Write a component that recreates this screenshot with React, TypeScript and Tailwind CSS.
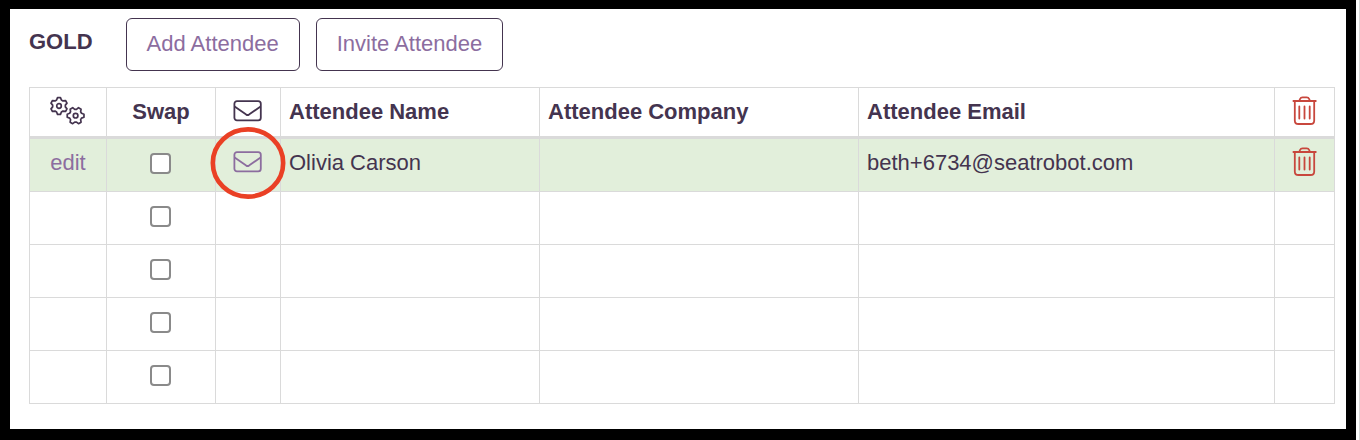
import React, { useState } from "react";

type Attendee = {
  name: string;
  company: string;
  email: string;
};

const seats: (Attendee | null)[] = [
  { name: "Olivia Carson", company: "", email: "beth+6734@seatrobot.com" },
  null,
  null,
  null,
  null,
];

function gearPath(cx: number, cy: number, turn: number) {
  const points: string[] = [];
  for (let i = 0; i < 6; i++) {
    const mid = turn + i * 60;
    const corners = [
      [-22, 6.4],
      [-10, 8.5],
      [10, 8.5],
      [22, 6.4],
    ];
    corners.forEach(([offset, r]) => {
      const a = ((mid + offset) * Math.PI) / 180;
      points.push(`${(cx + r * Math.cos(a)).toFixed(2)} ${(cy + r * Math.sin(a)).toFixed(2)}`);
    });
  }
  return `M${points.join("L")}Z`;
}

function GearsIcon() {
  return (
    <svg viewBox="0 0 38 30" className="w-[38px] h-[30px]" fill="none" stroke="currentColor" strokeWidth="1.7" strokeLinejoin="round" aria-hidden="true">
      <path d={gearPath(10, 10, 30)} />
      <circle cx="10" cy="10" r="2.3" />
      <path d={gearPath(26.6, 19.7, 0)} />
      <circle cx="26.6" cy="19.7" r="2.3" />
    </svg>
  );
}

function EnvelopeIcon() {
  return (
    <svg viewBox="0 0 30 22" className="w-[30px] h-[22px]" fill="none" stroke="currentColor" strokeWidth="1.8" strokeLinejoin="round" aria-hidden="true">
      <rect x="1.4" y="1.2" width="26.4" height="19.2" rx="2.6" />
      <path d="M1.6 6.5L13.2 14.6Q14.6 15.4 16 14.6L27.6 6.5" />
    </svg>
  );
}

function TrashIcon() {
  return (
    <svg viewBox="0 0 26 30" className="w-[26px] h-[30px]" fill="none" stroke="currentColor" strokeWidth="1.8" strokeLinecap="round" strokeLinejoin="round" aria-hidden="true">
      <path d="M1.4 5H23.8M7.3 4.8L8 3Q8.7 1.4 10.5 1.4H14.7Q16.5 1.4 17.2 3L17.9 4.8" />
      <path d="M2.8 5V24.4Q2.8 28 6.5 28H18.5Q22.2 28 22.2 24.4V5" />
      <path d="M7.3 10.4V22.6M12.5 10.4V22.6M17.7 10.4V22.6" />
    </svg>
  );
}

export default function App() {
  const [swaps, setSwaps] = useState<boolean[]>(seats.map(() => false));

  const toggleSwap = (index: number) => {
    setSwaps(swaps.map((s, i) => (i === index ? !s : s)));
  };

  const cell = "border border-[#dadada] align-top";

  return (
    <div className="min-h-screen flex bg-white border-r border-[#dadada] pr-[3px] font-['Liberation_Sans',Arial,sans-serif] text-[22px] leading-8 text-[#44344f]">
      <div className="flex-1 flex bg-black pt-[9px] pr-[10px] pb-[11px] pl-[10px]">
        <main className="flex-1 bg-white pt-[9px] pr-[11px] pl-[19px]">
          {/* Toolbar */}
          <div className="flex items-start mb-4">
            <h1 className="font-bold mt-2 mr-[33px]">GOLD</h1>
            <div className="flex gap-4">
              <button className="h-[53px] px-5 pb-[2px] border border-[#44344f] rounded-md text-[#8c6d9f]">Add Attendee</button>
              <button className="h-[53px] px-5 pb-[2px] border border-[#44344f] rounded-md text-[#8c6d9f]">Invite Attendee</button>
            </div>
          </div>

          {/* Attendees */}
          <table className="w-full table-fixed border-collapse text-left">
            <colgroup>
              <col className="w-[77px]" />
              <col className="w-[109px]" />
              <col className="w-[65px]" />
              <col className="w-[259px]" />
              <col className="w-[319px]" />
              <col />
              <col className="w-[60px]" />
            </colgroup>
            <thead>
              <tr className="h-[50px]">
                <th aria-label="Settings" className={`${cell} border-b-3 pt-2`}>
                  <div className="flex justify-center"><GearsIcon /></div>
                </th>
                <th className={`${cell} border-b-3 pt-2 text-center`}>Swap</th>
                <th aria-label="Message" className={`${cell} border-b-3 pt-3`}>
                  <div className="flex justify-center"><EnvelopeIcon /></div>
                </th>
                <th className={`${cell} border-b-3 pt-2 px-2`}>Attendee Name</th>
                <th className={`${cell} border-b-3 pt-2 px-2`}>Attendee Company</th>
                <th className={`${cell} border-b-3 pt-2 px-2`}>Attendee Email</th>
                <th aria-label="Delete" className={`${cell} border-b-3 pt-2 text-[#c8473d]`}>
                  <div className="flex justify-center"><TrashIcon /></div>
                </th>
              </tr>
            </thead>
            <tbody>
              {seats.map((seat, i) => (
                <tr key={i} className={seat ? "h-[54px] bg-[#e2efdb]" : "h-[53px]"}>
                  <td className={`${cell} pt-2 text-center`}>
                    {seat && <a href="#edit" className="text-[#8c6d9f]">edit</a>}
                  </td>
                  <td className={`${cell} pt-[14px] pr-[2px]`}>
                    <input
                      type="checkbox"
                      aria-label={`Swap seat ${i + 1}`}
                      checked={swaps[i]}
                      onChange={() => toggleSwap(i)}
                      className="block mx-auto size-[21px] appearance-none rounded border-2 border-[#8a8a8a] bg-white checked:bg-[#8c6d9f]"
                    />
                  </td>
                  <td className={`${cell} pt-3`}>
                    {seat && (
                      <div className="relative flex justify-center">
                        <a href="#message" aria-label={`Message ${seat.name}`} className="text-[#8c6d9f]">
                          <EnvelopeIcon />
                        </a>
                        <svg viewBox="0 0 76 74" className="absolute left-1/2 top-1/2 -translate-1/2 w-[76px] h-[74px] max-w-none pointer-events-none" fill="none" aria-hidden="true">
                          <ellipse cx="38" cy="38" rx="35.2" ry="33.6" stroke="#ea4025" strokeWidth="4.6" />
                        </svg>
                      </div>
                    )}
                  </td>
                  <td className={`${cell} pt-2 px-2`}>{seat?.name}</td>
                  <td className={`${cell} pt-2 px-2`}>{seat?.company}</td>
                  <td className={`${cell} pt-2 px-2`}>{seat?.email}</td>
                  <td className={`${cell} pt-2`}>
                    {seat && (
                      <button aria-label={`Delete ${seat.name}`} className="block mx-auto text-[#c8473d]">
                        <TrashIcon />
                      </button>
                    )}
                  </td>
                </tr>
              ))}
            </tbody>
          </table>
        </main>
      </div>
    </div>
  );
}
